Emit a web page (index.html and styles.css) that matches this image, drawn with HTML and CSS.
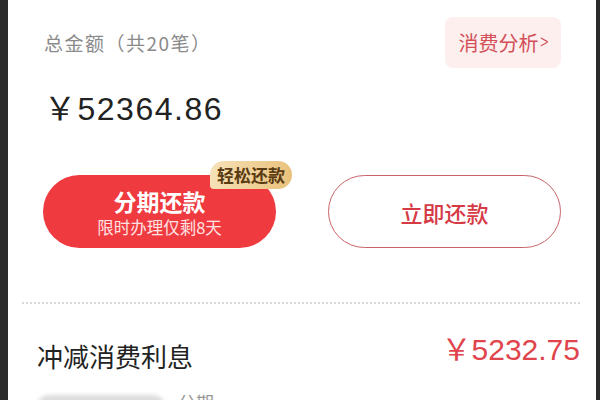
FILE: index.html
```html
<!DOCTYPE html>
<html lang="zh-CN">

<head>
    <meta charset="UTF-8">
    <meta name="viewport" content="width=device-width, initial-scale=1.0">
    <title>账单</title>
    <link rel="stylesheet" href="styles.css">
</head>

<body>
    <div class="panel">
        <div class="summary">
            <div class="summary-head">
                <span class="total-label">总金额（共20笔）</span>
                <button class="analysis">消费分析<span class="arrow">&gt;</span></button>
            </div>
            <div class="amount">￥52364.86</div>
            <div class="actions">
                <button class="btn-stage">
                    <span class="stage-title">分期还款</span>
                    <span class="stage-sub">限时办理仅剩8天</span>
                    <span class="badge">轻松还款</span>
                </button>
                <button class="btn-now">立即还款</button>
            </div>
        </div>
        <div class="divider"></div>
        <div class="item">
            <span class="item-title">冲减消费利息</span>
            <span class="item-amount">￥5232.75</span>
        </div>
        <div class="item-sub">
            <span class="blurred"></span>
            <span class="item-tag">分期</span>
        </div>
    </div>
</body>

</html>
```

FILE: styles.css
```css
* {
    margin: 0;
    padding: 0;
    box-sizing: border-box;
}

body {
    background-color: #2b2b2b;
    font-family: "Liberation Sans", "Noto Sans CJK SC", sans-serif;
    height: 400px;
    overflow: hidden;
}

.panel {
    margin: 0 4px 0 8px;
    height: 400px;
    background-color: #fff;
    overflow: hidden;
}

.summary {
    padding: 17px 35px 0 35px;
}

.summary-head {
    display: flex;
    justify-content: space-between;
    align-items: center;
}

.total-label {
    font-family: "Noto Sans CJK SC", sans-serif;
    font-size: 19px;
    letter-spacing: 1.5px;
    color: #8a8a8a;
    margin-left: 1px;
}

.analysis {
    height: 51px;
    padding: 0 11px 0 13px;
    border: none;
    border-radius: 8px;
    background-color: #fdefee;
    color: #d24f58;
    font-family: "Noto Sans CJK SC", sans-serif;
    font-size: 20px;
    display: flex;
    align-items: center;
}

.arrow {
    font-family: "Liberation Sans", sans-serif;
    font-size: 18px;
    margin-left: 1px;
    transform: scaleX(0.8);
}

.amount {
    margin-top: 21px;
    margin-left: 1px;
    font-size: 32px;
    line-height: 40px;
    letter-spacing: 1.5px;
    color: #222;
}

.actions {
    margin-top: 46px;
    display: flex;
    justify-content: space-between;
}

.btn-stage,
.btn-now {
    width: 233px;
    height: 73px;
    border-radius: 37px;
    font-family: "Noto Sans CJK SC", sans-serif;
    display: flex;
    flex-direction: column;
    justify-content: center;
    align-items: center;
}

.btn-stage {
    position: relative;
    border: none;
    background-color: #ef3a3f;
    color: #fff;
}

.stage-title {
    font-size: 23px;
    font-weight: bold;
    line-height: 28px;
}

.stage-sub {
    font-size: 16.5px;
    line-height: 20px;
    margin-top: 2px;
    color: #ffe3e3;
}

.badge {
    position: absolute;
    top: -14px;
    right: -16px;
    height: 28px;
    padding: 0 7px;
    border-radius: 14px 14px 14px 4px;
    background: linear-gradient(90deg, #f6e2b8, #e9c17c);
    color: #5b3b12;
    font-size: 17px;
    font-weight: bold;
    line-height: 28px;
}

.btn-now {
    border: 1.5px solid #c8636a;
    background-color: #fff;
    color: #d63a45;
    font-size: 22px;
    font-weight: 500;
}

.divider {
    margin: 54px 16px 0 14px;
    border-top: 2px dotted #d8d8d8;
}

.item {
    margin-top: 28px;
    padding: 0 16px 0 29px;
    display: flex;
    justify-content: space-between;
    align-items: center;
}

.item-title {
    font-size: 26px;
    line-height: 36px;
    color: #222;
    font-family: "Noto Sans CJK SC", sans-serif;
}

.item-amount {
    font-size: 30px;
    line-height: 36px;
    color: #e0444d;
    margin-bottom: 11px;
}

.item-sub {
    margin-top: 12px;
    padding-left: 29px;
    display: flex;
    align-items: flex-start;
}

.blurred {
    width: 128px;
    height: 26px;
    border-radius: 12px;
    background-color: #dcdcdc;
    filter: blur(2px);
    margin-top: 4px;
}

.item-tag {
    margin-left: 13px;
    font-size: 18px;
    line-height: 22px;
    color: #999;
    font-family: "Noto Sans CJK SC", sans-serif;
}
```
